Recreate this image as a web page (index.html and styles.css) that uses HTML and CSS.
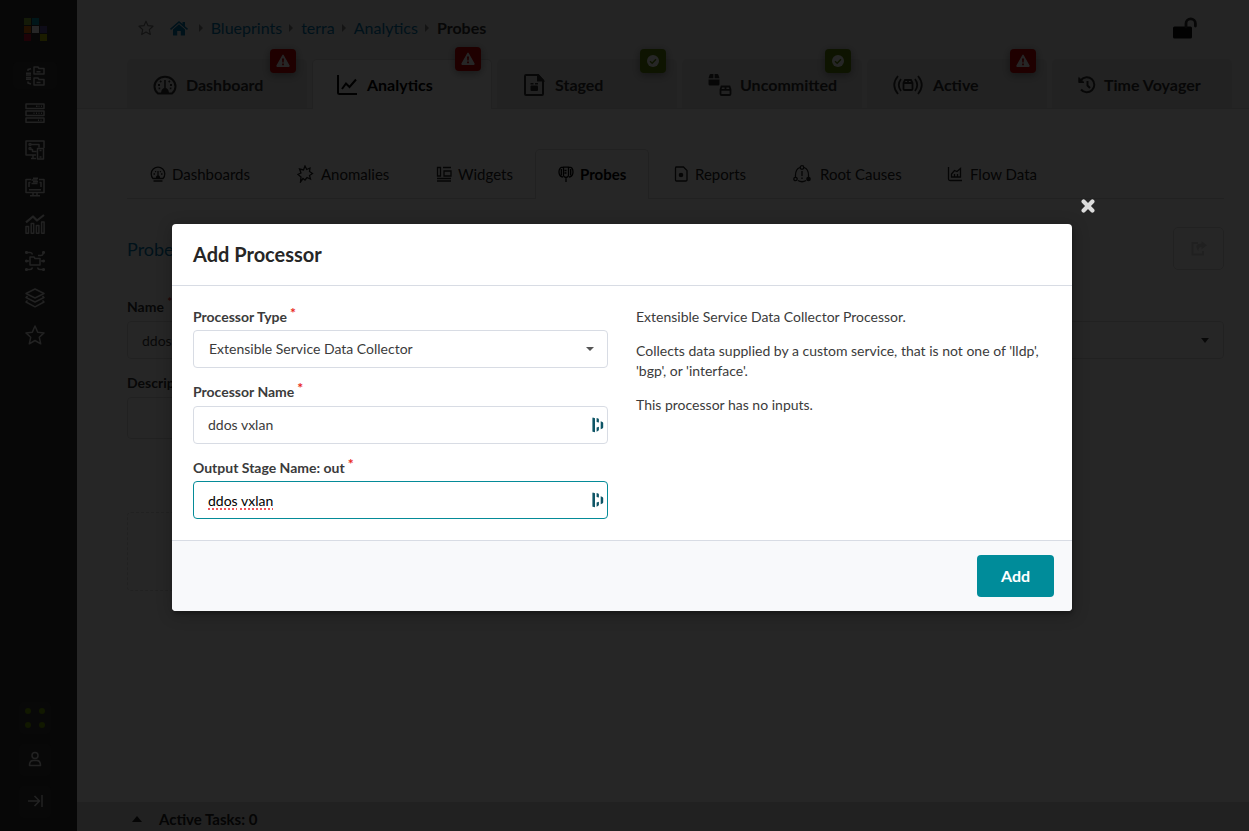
FILE: index.html
```html
<!DOCTYPE html>
<html lang="en">
<head>
<meta charset="utf-8">
<title>Add Processor</title>
<link rel="stylesheet" href="styles.css">
</head>
<body>
<svg class="defs" width="0" height="0">
  <symbol id="warn" viewBox="0 0 14 14"><path fill="currentColor" fill-rule="evenodd" d="M6.2 1.2Q7 0 7.8 1.2L13.6 11.5Q14 12.8 12.7 13H1.3Q0 12.8.4 11.5ZM6 4.6L6.3 8.6H7.7L8 4.6ZM6.1 9.6V11.2H7.9V9.6Z"/></symbol>
  <symbol id="check" viewBox="0 0 12 12"><circle cx="6" cy="6" r="6" fill="currentColor"/><path d="M3 6.2L5.2 8.3L9 4.3" fill="none" stroke="#5c8708" stroke-width="1.5"/></symbol>
  <symbol id="gauge" viewBox="0 0 24 20"><path d="M5 18.5A10.5 9.6 0 1 1 19 18.5Z" fill="none" stroke="currentColor" stroke-width="2" stroke-linejoin="round"/><path d="M12 5V14" fill="none" stroke="currentColor" stroke-width="1.6"/><path d="M8 18Q8.500 13 12 13T16 18Z" stroke="none" fill="currentColor"/><path d="M5 10h2M7 6l1.400 1M17 10h2M17 6l-1.400 1M5.600 13.400h1.600M16.800 13.400h1.600" fill="none" stroke="currentColor" stroke-width="1.800"/></symbol>
  <symbol id="dash" viewBox="0 0 12 16"><path fill="currentColor" d="M.4 1Q.4.600.800.600L3 1.200V15.200L.8 14.800Q.4 14.700.4 14.200ZM4.600 1L6.300 1.600Q6.900 1.900 6.900 2.500V5.600L4.600 4.900ZM4.600 10.600L6.900 9.700V12.800Q6.900 13.500 6.300 13.800L4.600 14.700ZM8.700 4.300L10.400 5Q11.200 5.300 11.200 6.100V10.200Q11.200 11 10.400 11.400L8.700 12.200Z"/></symbol>
</svg>
<div class="app">
  <nav class="sidebar">
    <svg class="logo" viewBox="0 0 24 24"><rect x="1" y="0" width="7" height="7" fill="#84b135"/><rect x="9" y="0" width="7" height="7" fill="#0095a9"/><rect x="1" y="8" width="7" height="7" fill="#e56a00"/><rect x="9" y="8" width="7" height="7" fill="#fff"/><rect x="17" y="8" width="7" height="7" fill="#5c4fa0"/><rect x="1" y="16" width="7" height="7" fill="#c8102e"/><rect x="17" y="16" width="7" height="7" fill="#b5bd00"/></svg>
    <div class="side-items">
      <div class="side-item current"><svg viewBox="0 0 20 20"><path d="M9 8V1h4l1 1.500h5V8ZM9 19V12h4l1 1.500h5V19ZM11.500 5.800h4M11.500 16.500h4M1 7.300h5M1 9h5M1 11.500h5M1 13.200h5M3 5V3.500l3-.8M3 15.500V17l3 1"/></svg></div>
      <div class="side-item"><svg viewBox="0 0 20 20"><path d="M1 1h18v4.500H1ZM1 8h18v4.500H1ZM1 15h18v4.300H1ZM11 3.300h1.500M13.500 3.300h1M16 3.300h1M8.500 10.300h1M11 10.300h1M13.500 10.300h1M16 10.300h1M13 17.200h1M15.500 17.200h1"/></svg></div>
      <div class="side-item"><svg viewBox="0 0 20 20"><path d="M11 15H1V1h18v7M6 18.500h5M8 15v3M12.500 8.500h6v10.500h-6ZM14.500 10.500h2M14.500 17h2M6 4.500h8v3M5.500 9.500h2v2h4"/><circle cx="5" cy="4.500" r="1"/><circle cx="5" cy="8.500" r="1"/></svg></div>
      <div class="side-item"><svg viewBox="0 0 20 20"><path d="M6 2.500H1V15.500h18V2.500h-5M5 18.800h10M8 15.500v3M12 15.500v3M4 12.800h12M4 10V5.500h1.500M16 10V5.500h-1.500M8 1.200h5M6.500 3h6M8 4.800h5M6.500 6.500h6"/></svg></div>
      <div class="side-item"><svg viewBox="0 0 20 20"><path d="M1 12.500h2.500v6.700H1ZM6.200 9.500h2.500v9.700H6.200ZM11.400 11.500h2.500v7.700h-2.500ZM16.600 8h2.500v11.200h-2.500Z"/><path d="M1 8.300L8 2.500L12 6.500L19 1" stroke-width="2.200"/></svg></div>
      <div class="side-item"><svg viewBox="0 0 20 20"><path d="M5 6h4l1 1.500h5V14H5ZM1.500 1.500H5Q7 1.500 7.500 3.500M13 4.500h3Q18 4.500 18.500 1.500M1 10h3M16 10h3M1.500 18.500H5Q7 18.500 7.500 16.500M12.500 16.500Q13 18.500 15 18.500h3.500"/><circle cx="1.500" cy="1.500" r=".8"/><circle cx="18.500" cy="1.500" r=".8"/><circle cx="1.500" cy="10" r=".8"/><circle cx="18.500" cy="10" r=".8"/><circle cx="1.500" cy="18.500" r=".8"/><circle cx="18.500" cy="18.500" r=".8"/></svg></div>
      <div class="side-item"><svg viewBox="0 0 20 20"><path d="M10 1L19 5.500L10 10L1 5.500ZM2.500 8L1 9.500L10 14L19 9.500L17.500 8M2.500 12.500L1 14L10 18.800L19 14L17.500 12.500"/></svg></div>
      <div class="side-item"><svg viewBox="0 0 20 20"><path d="M10 1L12.700 7.200L19 7.900L14.300 12.300L15.700 18.800L10 15.500L4.300 18.800L5.700 12.300L1 7.900L7.300 7.200Z"/></svg></div>
    </div>
    <div class="side-foot">
      <div class="side-btn"><svg viewBox="0 0 20 20"><g fill="#71a000" stroke="none"><circle cx="3" cy="3" r="3"/><circle cx="17" cy="3" r="3"/><circle cx="3" cy="17" r="3"/><circle cx="17" cy="17" r="3"/></g></svg></div>
      <div class="side-btn"><svg viewBox="0 0 20 20"><circle cx="10" cy="5.500" r="3"/><path d="M4.500 15.500Q4.500 10.500 8 10.500h4Q15.500 10.500 15.500 15.500Z"/></svg></div>
      <div class="side-btn"><svg viewBox="0 0 20 20"><path d="M3 9h11M9.500 4l5 5l-5 5M17 3v12"/></svg></div>
    </div>
  </nav>

  <div class="main">
    <header class="top">
      <div class="crumbs">
        <svg class="star" viewBox="0 0 16 16"><path d="M8 1.200L10 5.700L15 6.200L11.300 9.600L12.300 14.500L8 12L3.700 14.500L4.700 9.600L1 6.200L6 5.700Z" fill="none" stroke="currentColor" stroke-width="1.200" stroke-linejoin="round"/></svg>
        <svg class="home" viewBox="0 0 18 15"><path d="M9 3.200L15 8.400V14q0 .6-.6.600H10.800V10H7.200v4.600H3.600Q3 14.600 3 14V8.400Z"/><path d="M9 0L12.500 3V1H15V5.200L18 7.800L17 9L9 2L1 9L0 7.800Z"/></svg>
        <i class="sep first"></i><a>Blueprints</a><i class="sep"></i><a>terra</a><i class="sep"></i><a>Analytics</a><i class="sep"></i><b>Probes</b>
        <svg class="lock" viewBox="0 0 24 22"><rect x="0" y="9.500" width="19" height="12" rx="1.500" fill="currentColor"/><path d="M13 10V6.500a4.700 4.700 0 0 1 9.400 0V9" fill="none" stroke="#333" stroke-width="2.800" stroke-linecap="round"/></svg>
      </div>
      <div class="tabs">
        <div class="tab"><svg class="i24" viewBox="0 0 24 20"><use href="#gauge"/></svg><span>Dashboard</span><em class="badge red"><svg viewBox="0 0 14 14"><use href="#warn"/></svg></em></div>
        <div class="tab on"><svg class="i22" viewBox="0 0 22 22"><path d="M2 1v17.500q0 1.500 1.500 1.500H21M6 15L10 9.500L13.500 13L20 5.500"/></svg><span>Analytics</span><em class="badge red"><svg viewBox="0 0 14 14"><use href="#warn"/></svg></em></div>
        <div class="tab staged"><svg class="i22" viewBox="0 0 22 22"><path d="M3 1H15L20 6.500V20q0 1-1 1H3q-1 0-1-1V2q0-1 1-1Z"/><path d="M15 1v5.500h5Z" fill="currentColor"/><rect x="7.500" y="11.500" width="7.500" height="5.500" rx="1" fill="currentColor" stroke="none"/><path d="M7.500 9.800h3M12 9.800h3" stroke-width="1.500"/></svg><span>Staged</span><em class="badge green"><svg viewBox="0 0 12 12"><use href="#check"/></svg></em></div>
        <div class="tab unc"><svg class="i24" viewBox="0 0 24 22"><path d="M.5 5.500h11V10q0 1.500-1.500 1.500H2Q.5 11.500.5 10ZM.5 4.300L1.500 1q.3-1 1.300-1H5.400V4.300ZM11.500 4.300L10.500 1q-.3-1-1.300-1H6.600V4.300Z" fill="currentColor" stroke="none"/><path d="M12.500 15.500L13.500 12.500h8l1 3v4.500q0 1-1 1h-8q-1 0-1-1ZM12.500 15.800h10M17.500 12.500v3" stroke-width="1.800"/></svg><span>Uncommitted</span><em class="badge green"><svg viewBox="0 0 12 12"><use href="#check"/></svg></em></div>
        <div class="tab act"><svg class="i30" viewBox="0 0 30 20"><path d="M5 1Q-2.500 10 5 19M25 1q7.500 9 0 18M8 4Q3.500 10 8 16M22 4q4.500 6 0 12M10.500 8L12 5h6l1.500 3v6q0 1-1 1h-7q-1 0-1-1ZM10.500 8h9M15 5v3" stroke-width="1.800"/></svg><span>Active</span><em class="badge red"><svg viewBox="0 0 14 14"><use href="#warn"/></svg></em></div>
        <div class="tab time"><svg class="i18" viewBox="0 0 18 18"><path d="M3 4A7.500 7.500 0 1 1 3 13.500M9.500 5V9.500L12 12"/><path d="M.8 1.500V6.500H6Z" fill="currentColor" stroke-width="1"/></svg><span>Time Voyager</span></div>
      </div>
    </header>

    <section class="content">
      <div class="subtabs">
        <div class="sub s1"><svg viewBox="0 0 16 16"><path d="M3 12.500a6.800 6.800 0 1 1 10 0ZM3.500 15h9M8 5v7M6.500 12.500Q6.500 10 8 10t1.500 2.500M3.500 8h1.500M11 8h1.500M5.200 5.200l.8.800M10.800 5.200l-.8.800"/></svg><span>Dashboards</span></div>
        <div class="sub s2"><svg viewBox="0 0 18 18"><path d="M9 1L10.700 4.500L14 3L13.500 6.500L16.500 8.500L13.500 10.500L14.500 14L11 12.500L9 15L7 13.500L4.500 17L5 12L2 9.500L5 8L3.500 4L7.500 5Z"/></svg><span>Anomalies</span></div>
        <div class="sub s3"><svg viewBox="0 0 16 16"><path d="M1.500 1.500h3v8.500h-3ZM7 1.500h8M8 5h7v5H8ZM1 12.500h14M1 15h14"/></svg><span>Widgets</span></div>
        <div class="sub s4 on"><svg viewBox="0 0 16 16"><path d="M5 1.200Q1 1.200 1 6T5 11M11 1.200Q15 1.200 15 6T11 11M5.500 1.200h5V9.500q0 1.500-2.500 2q-2.500-.5-2.500-2ZM8 11v5M6.500 4.500h2M6.500 7h2M3.300 3v6.500M12.700 3v6.500"/></svg><span>Probes</span></div>
        <div class="sub s5"><svg viewBox="0 0 16 16"><path d="M2.500 1H10.500L14 4.500V14q0 1-1 1H3.500q-1 0-1-1V2q0-1 1-1"/><circle cx="8" cy="9" r="2.300" fill="currentColor" stroke="none"/></svg><span>Reports</span></div>
        <div class="sub s6"><svg viewBox="0 0 18 18"><path d="M7 2.500Q2 4 2.500 12M11 2.500Q16 4 15.500 12M5 15.500Q9 18 13 15.500M9 6v5M9 12.500v1.500"/><circle cx="9" cy="2.500" r="1.800"/><circle cx="2.500" cy="14" r="1.700"/><circle cx="15.500" cy="14" r="1.700" fill="currentColor"/></svg><span>Root Causes</span></div>
        <div class="sub s7"><svg viewBox="0 0 16 16"><path d="M1.500 1v12q0 1.500 1.500 1.500h12M4.500 11V8L7.500 4.500L10 5.500L13.500 2.500V11ZM7.500 8v3M10.500 8v3"/></svg><span>Flow Data</span></div>
      </div>
      <div class="title-row"><a>Probe</a><div class="export"><svg viewBox="0 0 16 15"><path d="M7 2H1.500V13.500H12V10" fill="none" stroke="currentColor" stroke-width="1.900"/><path fill="currentColor" d="M10.500 0L16 4.300L10.500 8.500V6Q7 6 7.500 10.500Q2 2.500 10.500 2.500Z"/></svg></div></div>
      <div class="blabel name">Name <sup>*</sup></div>
      <div class="binput">ddos<i class="caret"></i></div>
      <div class="blabel desc">Description</div>
      <div class="barea"></div>
      <div class="dashed"></div>
    </section>
    <footer class="tasks"><i></i><span>Active Tasks: 0</span></footer>
  </div>
</div>

<div class="dimmer">
  <svg class="close" viewBox="0 0 14 14"><path d="M2.600 2.600L11.400 11.400M11.400 2.600L2.600 11.400"/></svg>
  <div class="modal">
    <h1>Add Processor</h1>
    <div class="body">
      <form class="form">
        <label>Processor Type<sup>*</sup></label>
        <div class="field select">Extensible Service Data Collector<i class="caret"></i></div>
        <label class="second">Processor Name<sup>*</sup></label>
        <div class="field">ddos vxlan<svg class="dl" viewBox="0 0 12 16"><use href="#dash"/></svg></div>
        <label>Output Stage Name: out<sup>*</sup></label>
        <div class="field focus"><span><u>ddos</u> <u>vxlan</u></span><svg class="dl" viewBox="0 0 12 16"><use href="#dash"/></svg></div>
      </form>
      <div class="info">
        <p>Extensible Service Data Collector Processor.</p>
        <p>Collects data supplied by a custom service, that is not one of 'lldp', 'bgp', or 'interface'.</p>
        <p>This processor has no inputs.</p>
      </div>
    </div>
    <div class="actions"><button>Add</button></div>
  </div>
</div>
</body>
</html>
```
FILE: styles.css
```css
* { box-sizing: border-box; }
body { margin: 0; font: 14px/20px Lato, sans-serif; color: #3b3b3b; background: #fff; overflow: hidden; }
.defs { position: absolute; }
svg { display: block; flex: none; }
i { font-style: normal; }

.app { display: flex; height: 831px; }
.sidebar { width: 77px; flex: none; background: #2e2e2e; padding: 18px 7px 13px 0; display: flex; flex-direction: column; align-items: center; color: #fff; }
.logo { width: 24px; height: 24px; }
.side-items { margin-top: 20px; display: flex; flex-direction: column; gap: 10px; }
.side-item { width: 44px; height: 27px; border-radius: 5px; display: flex; align-items: center; justify-content: center; }
.side-item.current { background: #383838; }
.side-item svg, .side-btn svg { width: 20px; height: 20px; fill: none; stroke: #e0e0e0; stroke-width: 1.5; stroke-linejoin: round; }
.side-foot { margin-top: auto; display: flex; flex-direction: column; gap: 10px; }
.side-btn { width: 32px; height: 32px; border-radius: 5px; background: #383838; display: flex; align-items: center; justify-content: center; }

.main { flex: 1; min-width: 0; display: flex; flex-direction: column; }
.top { height: 109px; background: #f0f0f0; border-bottom: 1px solid #dcdcdc; padding: 18px 0 0 50px; }
.crumbs { height: 20px; margin-bottom: 21px; padding: 0 52px 0 11px; display: flex; align-items: center; font-size: 16px; }
.crumbs a { color: #0078b0; }
.crumbs b { color: #333; }
.star { width: 16px; height: 16px; color: #777; margin-right: 16px; }
.home { width: 18px; height: 15px; fill: #0078b0; }
.sep { border: 4px solid transparent; border-left: 4px solid #888; border-right: 0; margin: 0 8px 0 7px; }
.sep.first { margin-left: 10.7px; }
.lock { width: 24px; height: 22px; margin-left: auto; color: #111; }
.tabs { display: flex; gap: 5px; height: 50px; }
.tab { position: relative; width: 180px; height: 49px; background: #e2e2e2; border-radius: 5px 5px 0 0; display: flex; align-items: center; padding: 2px 0 0 26px; font-size: 16px; font-weight: 700; color: #333; }
.tab svg { fill: none; stroke: currentColor; stroke-width: 2; }
.tab.on { background: #fff; border: 1px solid #dcdcdc; border-bottom: 0; height: 50px; padding: 0 0 0 23px; color: #000; }
.i24 { width: 24px; height: 22px; margin-right: 9px; }
.i22 { width: 22px; height: 22px; margin-right: 9px; }
.staged .i22 { margin-right: 10px; }
.unc .i24 { margin-right: 8px; }
.i30 { width: 30px; height: 20px; margin-right: 10px; }
.i18 { width: 18px; height: 18px; margin-right: 8px; }
.badge { position: absolute; right: 11px; top: -10px; width: 26px; height: 24px; border-radius: 4px; display: flex; align-items: center; justify-content: center; box-shadow: 0 2px 8px rgba(0,0,0,.4); }
.on .badge { top: -13px; right: 10px; }
.badge svg { width: 14px; height: 14px; stroke: none; color: #fff; }
.badge.green svg { width: 12px; height: 12px; }
.red { background: #cc0000; }
.green { background: #5c8708; }

.content { flex: 1; padding: 40px 25px 0 50px; }
.subtabs { display: flex; height: 50px; border-bottom: 1px solid #dcdcdc; }
.sub { display: flex; align-items: center; height: 50px; font-size: 15px; color: #222; }
.sub svg { width: 16px; height: 16px; margin-right: 6px; fill: none; stroke: currentColor; stroke-width: 1.3; }
.s1 { width: 169px; padding-left: 23px; }
.s2 { width: 140px; }
.s3 { width: 99px; }
.s4 { width: 114px; }
.s5 { width: 144px; padding-left: 24px; }
.s6 { width: 154px; }
.sub.s2 svg, .sub.s6 svg { width: 18px; height: 18px; }
.sub.s2 svg { margin-right: 7px; }
.sub.s6 svg { margin-right: 9px; }
.s7 span { padding-left: 1px; }
.sub.on { border: 1px solid #dcdcdc; border-bottom: 0; border-radius: 5px 5px 0 0; background: #fff; padding: 0 0 2px 22px; font-weight: 700; color: #000; }
.title-row { height: 43px; margin-top: 28px; display: flex; justify-content: space-between; font-size: 18px; line-height: 44px; }
.title-row a { color: #0078b0; }
.export { width: 51px; height: 43px; border: 1px solid #dcdcdc; border-radius: 5px; color: #d4d4d4; display: flex; align-items: center; justify-content: center; }
.export svg { width: 16px; height: 15px; }
.blabel { font-weight: 700; height: 20px; color: #333; }
.blabel sup { color: #db2828; line-height: 0; font-weight: 700; }
.name { margin-top: 27px; }
.binput { margin-top: 4px; height: 38px; border: 1px solid #dcdcdc; border-radius: 4px; padding: 1px 14px 0; display: flex; align-items: center; justify-content: space-between; }
.desc { margin-top: 14px; }
.barea { margin-top: 4px; width: 532px; height: 42px; border: 1px solid #dcdcdc; border-radius: 4px; }
.dashed { margin-top: 73px; width: 532px; height: 79px; border: 1px dashed #dcdcdc; border-radius: 4px; }
.caret { border: 4.5px solid transparent; border-top: 5px solid currentColor; border-bottom: 0; }
.select .caret { border-top-width: 4px; }
.tasks { height: 29px; background: #dcdcdc; padding: 5px 0 0 55px; display: flex; align-items: center; gap: 16px; font-size: 15px; font-weight: 700; color: #222; }
.tasks i { border: 5.5px solid transparent; border-bottom: 6px solid currentColor; border-top: 0; margin-right: 1px; }

.dimmer { position: absolute; inset: 0; background: rgba(0,0,0,.85); padding-top: 224px; padding-left: 172px; }
.close { position: absolute; left: 1081px; top: 199px; width: 14px; height: 14px; fill: none; stroke: #dcdcdc; stroke-width: 4.2; stroke-linecap: round; }
.modal { width: 900px; height: 387px; border-radius: 4px; background: #fff; overflow: hidden; box-shadow: 1px 3px 3px rgba(0,0,0,.2), 1px 3px 15px 2px rgba(0,0,0,.2); display: flex; flex-direction: column; }
h1 { margin: 0; height: 62px; padding: 0 21px; border-bottom: 1px solid #d8dce4; font-size: 20px; line-height: 61px; color: #262626; font-weight: 700; }
.body { height: 254px; padding: 21px 21px 0; display: flex; gap: 28px; }
.form { width: 415px; }
.form label { display: block; height: 20px; font-weight: 700; font-size: 14px; }
.form label.second { line-height: 18px; }
.form sup { font-size: 14px; font-weight: 700; color: #e8281c; line-height: 0; margin-left: 3px; vertical-align: 4px; }
.field { height: 38px; margin: 3px 0 14.5px; border: 1px solid #d8dce4; border-radius: 4px; padding: 0 3px 0 14px; display: flex; align-items: center; justify-content: space-between; }
.select { padding: 0 13px 0 15px; }
.select .caret { color: #555; }
.focus { border-color: #058b98; color: #000; }
.focus span { padding-top: 2px; }
.focus u { text-decoration: underline dotted #f2555a 2px; text-underline-offset: 2px; text-decoration-skip-ink: none; }
.dl { width: 12px; height: 16px; color: #0e5566; }
.info { width: 410px; }
.info p { margin: 0 0 14px; }
.actions { flex: 1; background: #f8f9fb; border-top: 1px solid #d8dce4; padding: 14px 18px; display: flex; justify-content: flex-end; }
button { width: 77px; height: 42px; padding: 0 0 2px; border: 0; border-radius: 4px; background: #008c9a; color: #fff; font: 700 16px Lato, sans-serif; }
```
